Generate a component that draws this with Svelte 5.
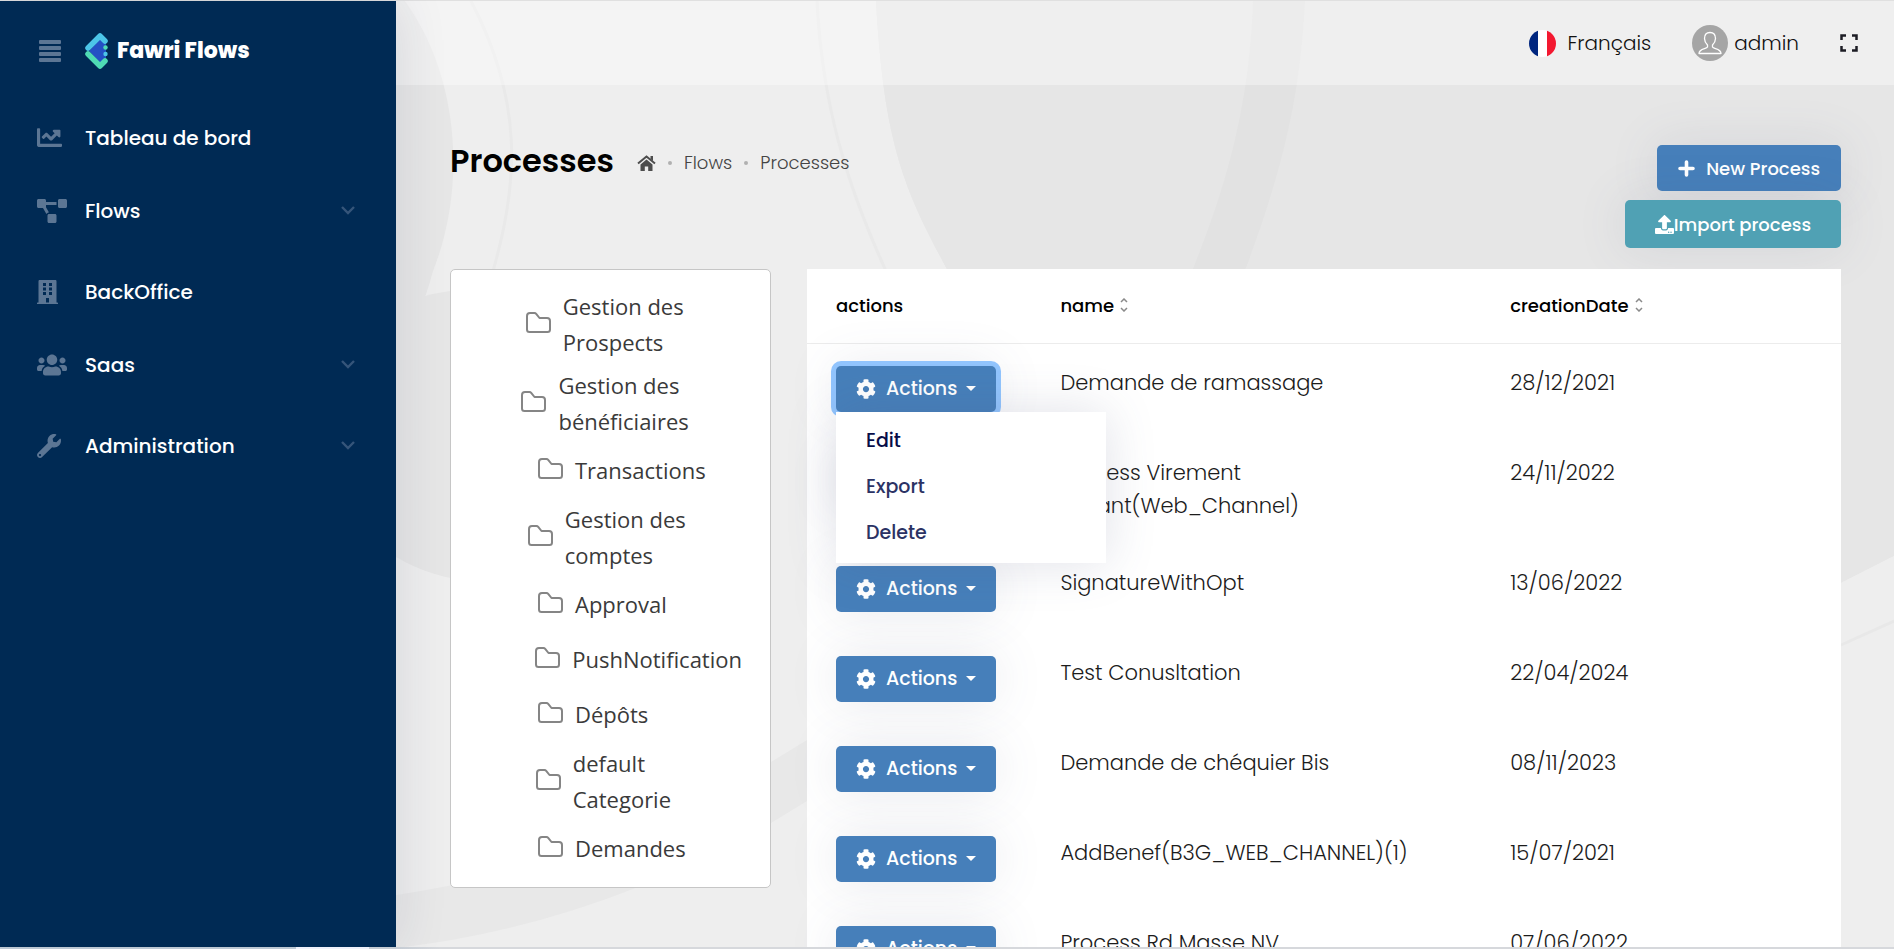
<script>
  const icons = {
    chart: { w: 512, d: 'M496 384H64V80c0-8.84-7.16-16-16-16H16C7.16 64 0 71.16 0 80v336c0 17.67 14.33 32 32 32h464c8.84 0 16-7.16 16-16v-32c0-8.84-7.16-16-16-16zM464 96H345.94c-21.38 0-32.09 25.85-16.97 40.97l32.4 32.4L288 242.75l-73.37-73.37c-12.5-12.5-32.76-12.5-45.25 0l-68.69 68.69c-6.25 6.25-6.25 16.38 0 22.63l22.62 22.62c6.25 6.25 16.38 6.25 22.63 0L192 237.25l73.37 73.37c12.5 12.5 32.76 12.5 45.25 0l96-96 32.4 32.4c15.12 15.12 40.97 4.41 40.97-16.97V112c.01-8.84-7.15-16-15.99-16z' },
    diagram: { w: 640, d: 'M384 320H256c-17.67 0-32 14.33-32 32v128c0 17.67 14.33 32 32 32h128c17.67 0 32-14.33 32-32V352c0-17.67-14.33-32-32-32zM192 32c0-17.67-14.33-32-32-32H32C14.33 0 0 14.33 0 32v128c0 17.67 14.33 32 32 32h95.72l73.16 128.04C211.98 300.98 232.4 288 256 288h.28L192 175.51V128h224V64H192V32zM608 0H480c-17.67 0-32 14.33-32 32v128c0 17.67 14.33 32 32 32h128c17.67 0 32-14.33 32-32V32c0-17.67-14.33-32-32-32z' },
    building: { w: 448, d: 'M436 480h-20V24c0-13.255-10.745-24-24-24H56C42.745 0 32 10.745 32 24v456H12c-6.627 0-12 5.373-12 12v20h448v-20c0-6.627-5.373-12-12-12zM128 64h64v64h-64zM256 64h64v64h-64zM128 160h64v64h-64zM256 160h64v64h-64zM128 256h64v64h-64zM256 256h64v64h-64zM192 384h64v96h-64z' },
    users: { w: 640, d: 'M96 224c35.3 0 64-28.7 64-64s-28.7-64-64-64-64 28.7-64 64 28.7 64 64 64zm448 0c35.3 0 64-28.7 64-64s-28.7-64-64-64-64 28.7-64 64 28.7 64 64 64zm32 32h-64c-17.6 0-33.5 7.1-45.1 18.6 40.3 22.1 68.9 62 75.1 109.4h66c17.7 0 32-14.3 32-32v-32c0-35.3-28.7-64-64-64zm-256 0c61.9 0 112-50.1 112-112S381.9 32 320 32 208 82.1 208 144s50.1 112 112 112zm76.8 32h-8.3c-20.8 10-43.9 16-68.5 16s-47.6-6-68.5-16h-8.3C179.6 288 128 339.6 128 403.2V432c0 26.5 21.5 48 48 48h288c26.5 0 48-21.5 48-48v-28.8c0-63.6-51.6-115.2-115.2-115.2zm-223.7-13.4C161.5 263.1 145.6 256 128 256H64c-35.3 0-64 28.7-64 64v32c0 17.7 14.3 32 32 32h65.9c6.3-47.4 34.9-87.3 75.2-109.4z' },
    wrench: { w: 512, d: 'M507.73 109.1c-2.24-9.03-13.54-12.09-20.12-5.51l-74.36 74.36-67.88-11.31-11.31-67.88 74.36-74.36c6.62-6.62 3.43-17.9-5.66-20.16-47.38-11.74-99.55.91-136.58 37.93-39.64 39.64-50.55 97.1-34.05 147.2L18.74 402.76c-24.99 24.99-24.99 65.51 0 90.5 24.99 24.99 65.51 24.99 90.5 0l213.21-213.21c50.12 16.71 107.47 5.68 147.37-34.22 37.07-37.07 49.7-89.32 37.91-136.73zM64 472c-13.25 0-24-10.75-24-24 0-13.26 10.75-24 24-24s24 10.74 24 24c0 13.25-10.75 24-24 24z' },
    cog: { w: 512, d: 'M487.4 315.7l-42.6-24.6c4.3-23.2 4.3-47 0-70.2l42.6-24.6c4.9-2.8 7.1-8.6 5.5-14-11.1-35.6-30-67.8-54.7-94.6-3.8-4.1-10-5.1-14.8-2.3L380.8 110c-17.9-15.4-38.5-27.3-60.8-35.1V25.8c0-5.6-3.9-10.5-9.4-11.7-36.7-8.2-74.3-7.8-109.2 0-5.5 1.2-9.4 6.1-9.4 11.7V75c-22.2 7.9-42.8 19.8-60.8 35.1L88.7 85.5c-4.9-2.8-11-1.9-14.8 2.3-24.7 26.7-43.6 58.9-54.7 94.6-1.7 5.4.6 11.2 5.5 14L67.3 221c-4.3 23.2-4.3 47 0 70.2l-42.6 24.6c-4.9 2.8-7.1 8.6-5.5 14 11.1 35.6 30 67.8 54.7 94.6 3.8 4.1 10 5.1 14.8 2.3l42.6-24.6c17.9 15.4 38.5 27.3 60.8 35.1v49.2c0 5.6 3.9 10.5 9.4 11.7 36.7 8.2 74.3 7.8 109.2 0 5.5-1.2 9.4-6.1 9.4-11.7v-49.2c22.2-7.9 42.8-19.8 60.8-35.1l42.6 24.6c4.9 2.8 11 1.9 14.8-2.3 24.7-26.7 43.6-58.9 54.7-94.6 1.5-5.5-.7-11.3-5.6-14.1zM256 336c-44.1 0-80-35.9-80-80s35.9-80 80-80 80 35.9 80 80-35.9 80-80 80z' },
    upload: { w: 512, d: 'M296 384h-80c-13.3 0-24-10.7-24-24V192h-87.7c-17.8 0-26.7-21.5-14.1-34.1L242.3 5.7c7.5-7.5 19.8-7.5 27.3 0l152.2 152.2c12.6 12.6 3.7 34.1-14.1 34.1H320v168c0 13.3-10.7 24-24 24zm216-8v112c0 13.3-10.7 24-24 24H24c-13.3 0-24-10.7-24-24V376c0-13.3 10.7-24 24-24h136v8c0 30.9 25.1 56 56 56h80c30.9 0 56-25.1 56-56v-8h136c13.3 0 24 10.7 24 24zm-124 88c0-11-9-20-20-20s-20 9-20 20 9 20 20 20 20-9 20-20zm64 0c0-11-9-20-20-20s-20 9-20 20 9 20 20 20 20-9 20-20z' },
  };

  const nav = [
    { label: 'Tableau de bord', icon: 'chart' },
    { label: 'Flows', icon: 'diagram', sub: true },
    { label: 'BackOffice', icon: 'building' },
    { label: 'Saas', icon: 'users', sub: true },
    { label: 'Administration', icon: 'wrench', sub: true },
  ];

  const folders = [
    'Gestion des Prospects',
    'Gestion des bénéficiaires',
    'Transactions',
    'Gestion des comptes',
    'Approval',
    'PushNotification',
    'Dépôts',
    'default Categorie',
    'Demandes',
  ];

  const rows = [
    { name: 'Demande de ramassage', date: '28/12/2021' },
    { name: 'Process Virement Instant(Web_Channel)', date: '24/11/2022' },
    { name: 'SignatureWithOpt', date: '13/06/2022' },
    { name: 'Test Conusltation', date: '22/04/2024' },
    { name: 'Demande de chéquier Bis', date: '08/11/2023' },
    { name: 'AddBenef(B3G_WEB_CHANNEL)(1)', date: '15/07/2021' },
    { name: 'Process Rd Masse NV', date: '07/06/2022' },
  ];

  const menu = ['Edit', 'Export', 'Delete'];
  let openRow = $state(0);
</script>

{#snippet icon(name, size)}
  <svg height={size} width={(size * icons[name].w) / 512} viewBox="0 0 {icons[name].w} 512" fill="currentColor" fill-rule="evenodd" aria-hidden="true"><path d={icons[name].d} /></svg>
{/snippet}

{#snippet sorter()}
  <svg class="sorter" width="8" height="14" viewBox="0 0 8 14" fill="none" stroke="#8a8a8a" stroke-width="1.5" aria-hidden="true"><path d="M1 4l3-3 3 3M1 10l3 3 3-3" /></svg>
{/snippet}

<div class="shell">
  <aside>
    <div class="brand">
      <button class="toggle" aria-label="Menu">
        <svg width="22" height="22" viewBox="0 0 22 22" fill="currentColor"><rect width="22" height="4" rx="1" /><rect y="6" width="22" height="4" rx="1" /><rect y="12" width="22" height="4" rx="1" /><rect y="18" width="22" height="4" rx="1" /></svg>
      </button>
      <svg width="24" height="38" viewBox="0 0 24 38" aria-hidden="true">
        <path d="M15 7L4 19l11 12 6-4V11z" fill="#2450c4" />
        <path d="M3 16L15 4l5 5" fill="none" stroke="#4cc5e8" stroke-width="5.500" stroke-linecap="round" stroke-linejoin="round" />
        <path d="M3 22l12 12 5-5" fill="none" stroke="#4fdbb4" stroke-width="5.500" stroke-linecap="round" stroke-linejoin="round" />
        <circle cx="20.500" cy="15.500" r="2.200" fill="#4fdbb4" /><circle cx="20.500" cy="22" r="2.200" fill="#4cc5e8" />
      </svg>
      <span class="logo">Fawri Flows</span>
    </div>
    <nav>
      {#each nav as item}
        <a href="#top" class:sub={item.sub}>
          <span class="ico">{@render icon(item.icon, item.icon === 'chart' ? 25 : 24)}</span>
          <span class="txt">{item.label}</span>
          {#if item.sub}
            <svg width="14" height="9" viewBox="0 0 14 9" fill="none" stroke="#35557a" stroke-width="2.400" aria-hidden="true"><path d="M1 1l6 6 6-6" /></svg>
          {/if}
        </a>
      {/each}
    </nav>
  </aside>

  <main>
    <svg class="backdrop" viewBox="396 0 1498 949" preserveAspectRatio="xMinYMin slice" aria-hidden="true">
      <path d="M876 0C884 145 905 190 948 270C1060 470 1300 560 1894 555V0z" fill="#e6e6e6" />
      <path d="M876 0C884 145 905 190 948 270L1000 400L1841 582L1894 555V0z" fill="#e6e6e6" />
      <path d="M1700 650L1841 582L1894 555V949H1700z" fill="#eee" />
      <path d="M1841 644L1894 620" stroke="#e8e8e8" stroke-width="3" />
      <path d="M1253 0C1249 110 1225 190 1188 280H1241C1275 190 1300 110 1305 0z" fill="#e2e2e2" />
      <path d="M396 0H405C462 80 465 190 433 270Q420 320 396 350z" fill="#e6e6e6" />
      <path d="M471 0C523 100 519 180 493 270Q470 350 396 420" fill="none" stroke="#e9e9e9" stroke-width="3" />
      <path d="M817 0C822 100 845 180 886 270" fill="none" stroke="#e9e9e9" stroke-width="3" />
      <path d="M396 306Q430 289 470 289V580Q430 576 396 556z" fill="#e6e6e6" />
      <path d="M396 894Q620 860 771 761L807 739V800L771 822Q590 925 396 947z" fill="#e8e8e8" />
    </svg>

    <header>
      <button class="lang">
        <svg width="27" height="27" viewBox="0 0 27 27" aria-hidden="true"><clipPath id="disc"><circle cx="13.5" cy="13.5" r="13.5" /></clipPath><g clip-path="url(#disc)"><rect width="9" height="27" fill="#00267f" /><rect x="9" width="9" height="27" fill="#fff" /><rect x="18" width="9" height="27" fill="#f31830" /></g></svg>
        Français
      </button>
      <button class="user">
        <svg width="36" height="36" viewBox="0 0 36 36" fill="none" aria-hidden="true"><circle cx="18" cy="18" r="18" fill="#a5a5a5" /><path d="M18 7.500c-3.500 0-5.500 2.500-5.500 6 0 3 1.500 5 3 6.500v2c-1 2-8.500 1.500-8.500 6.500h22c0-5-7.500-4.500-8.500-6.500v-2c1.500-1.500 3-3.500 3-6.500 0-3.500-2-6-5.500-6z" stroke="#fff" stroke-width="1.300" stroke-linejoin="round" /></svg>
        admin
      </button>
      <button aria-label="Plein écran">
        <svg width="18" height="18" viewBox="0 0 18 18" fill="none" stroke="#1c1c24" stroke-width="2.500"><path d="M1.500 6V1.500H6M12 1.500h4.500V6M16.500 12v4.500H12M6 16.500H1.500V12" /></svg>
      </button>
    </header>

    <div class="content" id="top">
      <div class="titlebar">
        <h1>Processes</h1>
        <ol class="crumbs">
          <li><a href="#top" aria-label="Accueil"><svg width="19" height="16" viewBox="0 0 19 16" aria-hidden="true"><path d="M1 8.500L9.500 1.500 18 8.500" fill="none" stroke="#4d4d4d" stroke-width="2" /><path d="M13.500 1H16v5l-2.500-2zM9.500 4.500L15.500 9.500V16h-4.300v-4.500H7.800V16H3.500V9.500z" fill="#4d4d4d" /></svg></a></li>
          <li><a href="#top">Flows</a></li>
          <li><a href="#top">Processes</a></li>
        </ol>
        <div class="cta">
          <button class="btn new"><svg width="17" height="17" viewBox="0 0 17 17" stroke="#fff" stroke-width="3.600" stroke-linecap="round" aria-hidden="true"><path d="M8.500 2v13M2 8.500h13" /></svg>New Process</button>
          <button class="btn import">{@render icon('upload', 19)}Import process</button>
        </div>
      </div>

      <div class="panels">
        <ul class="tree">
          {#each folders as folder}
            <li>
              <span class="indent"></span>
              <svg width="25" height="26" viewBox="0 0 25 26" fill="none" stroke="#858585" stroke-width="2" stroke-linejoin="round" aria-hidden="true"><path d="M4 2h4.500q1 0 1.700.8L13.500 7H21q3 0 3 3v8.500q0 2.500-2.500 2.500h-18Q1 21 1 18.500V5q0-3 3-3z" /></svg>
              <span class="name">{folder}</span>
            </li>
          {/each}
        </ul>

        <div class="card">
          <table>
            <colgroup><col class="c1" /><col class="c2" /><col class="c3" /></colgroup>
            <thead>
              <tr>
                <th>actions</th>
                <th>name{@render sorter()}</th>
                <th>creationDate{@render sorter()}</th>
              </tr>
            </thead>
            <tbody>
              {#each rows as row, i}
                <tr>
                  <td>
                    <div class="drop">
                      <button class="btn act" class:open={openRow === i} aria-expanded={openRow === i} onclick={() => (openRow = openRow === i ? -1 : i)}>
                        {@render icon('cog', 20)}<span>Actions</span><i class="caret"></i>
                      </button>
                      {#if openRow === i}
                        <div class="menu">
                          {#each menu as entry}<button>{entry}</button>{/each}
                        </div>
                      {/if}
                    </div>
                  </td>
                  <td>{row.name}</td>
                  <td>{row.date}</td>
                </tr>
              {/each}
            </tbody>
          </table>
        </div>
      </div>
    </div>
  </main>
  <footer></footer>
</div>

<style>
  :global(body) { margin: 0; overflow: hidden; }
  * { box-sizing: border-box; }
  button { font: inherit; color: inherit; background: none; border: 0; padding: 0; cursor: pointer; }
  a { color: inherit; text-decoration: none; }
  svg { display: block; flex: none; }

  .shell {
    display: grid;
    grid-template: minmax(0, 1fr) 2px / 396px minmax(0, 1fr);
    height: 100vh;
    border-top: 1px solid #e0e0e0;
    background: #eee;
    font-family: Poppins, Inter, sans-serif;
    color: #212121;
  }

  aside { z-index: 1; background: #002a54; color: #fff; box-shadow: 0 0 50px rgba(30, 40, 80, 0.12); }
  .brand { display: flex; align-items: center; height: 100px; padding-left: 39px; }
  .toggle { color: #5c7694; margin-right: 24px; }
  .logo { margin-left: 8px; font-size: 22px; font-weight: 800; line-height: 28px; }
  nav a { display: flex; align-items: center; height: 73px; padding: 0 41px 0 37px; font-size: 20px; font-weight: 500; }
  nav a.sub { margin-bottom: 8px; }
  .ico { width: 48px; color: #5c7694; }
  .txt { flex: 1; }

  main { position: relative; overflow: hidden; }
  .backdrop { position: absolute; inset: 0; width: 100%; height: 100%; }
  header {
    position: relative;
    display: flex;
    align-items: center;
    justify-content: flex-end;
    height: 84px;
    padding-right: 36px;
    background: rgba(255, 255, 255, 0.36);
    font-size: 20px;
    font-weight: 300;
    color: #111;
  }
  .lang, .user { display: flex; align-items: center; }
  .lang { gap: 12px; margin-right: 41px; }
  .user { gap: 6px; margin-right: 41px; }

  .content { position: relative; padding: 60px 53px 0 54px; }
  .titlebar { display: flex; align-items: flex-start; margin-bottom: 21px; }
  h1 { margin: 0; font-size: 32px; font-weight: 600; line-height: 32px; color: #000; }
  .crumbs { display: flex; align-items: center; margin: 0 0 0 23px; padding: 0; list-style: none; font-size: 18px; font-weight: 300; line-height: 36px; color: #444; }
  .crumbs li { display: flex; align-items: center; }
  .crumbs li + li::before { content: ''; width: 4px; height: 4px; margin: 0 12px; border-radius: 50%; background: #b0b0b0; }
  .cta { display: flex; flex-direction: column; align-items: flex-end; gap: 9px; margin-left: auto; }

  .btn {
    display: flex;
    align-items: center;
    height: 46px;
    border-radius: 5px;
    background: #467fba;
    color: #fff;
    font-size: 18px;
    font-weight: 500;
    box-shadow: 0 0 50px rgba(82, 90, 125, 0.13);
  }
  .new { gap: 11px; padding: 0 21px; }
  .import { height: 48px; padding: 0 30px; background: #50a1b4; }

  .panels { display: flex; align-items: flex-start; gap: 36px; }
  .tree {
    flex: none;
    width: 321px;
    margin: 0;
    padding: 15px 28px 11px 0;
    border: 1px solid #c6c6c6;
    border-radius: 5px;
    background: #fff;
    list-style: none;
    font: 22px/36px 'Segoe UI', 'Open Sans', sans-serif;
    color: #3a3a3a;
  }
  .tree li { display: flex; align-items: center; min-height: 55px; padding: 3px 0 4px; }
  .indent { flex: 0 2 87px; }
  .name { flex: 0 3 auto; margin-left: 12px; }

  .card { flex: 1; min-width: 0; background: #fff; }
  table { width: 100%; table-layout: fixed; border-collapse: collapse; }
  .c1 { width: 21.7%; }
  .c2 { width: 43.5%; }
  th { height: 74px; padding: 0 29px; border-bottom: 1px solid #ececec; text-align: left; font-size: 18px; font-weight: 500; color: #000; }
  .sorter { display: inline-block; margin-left: 6px; }
  td { padding: 22px 29px; vertical-align: top; font-size: 21px; font-weight: 300; line-height: 33px; color: #1c1c1c; }
  .drop { position: relative; width: 160px; height: 46px; }
  .act { width: 160px; padding-left: 20px; font-size: 19px; line-height: 24px; }
  .act span { margin: 0 9px 0 10px; }
  .caret { border: 5px solid transparent; border-top-color: #fff; border-bottom: 0; }
  .act.open { box-shadow: 0 0 0 5px #91c4fd, 0 0 50px rgba(82, 90, 125, 0.13); }
  .menu {
    position: absolute;
    z-index: 2;
    top: 46px;
    left: 0;
    width: 270px;
    padding: 6px 0 7px;
    background: #fff;
    box-shadow: 0 0 50px rgba(82, 90, 125, 0.18);
  }
  .menu button { display: block; width: 100%; height: 46px; padding: 0 30px; text-align: left; font-size: 19px; font-weight: 500; color: #2b3264; }
  .menu button:first-child { color: #070d48; }

  footer { grid-column: 1 / -1; z-index: 2; background: linear-gradient(90deg, #bcc8d4 296px, #eef1fb 296px 369px, #c5ccd4 369px 396px, #d6d8dc 440px); }
</style>
